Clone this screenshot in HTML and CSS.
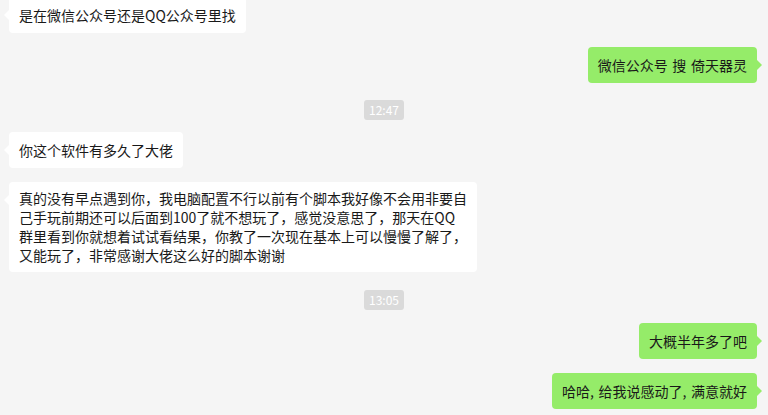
FILE: index.html
```html
<!DOCTYPE html>
<html lang="zh-CN">
<head>
<meta charset="utf-8">
<title>聊天</title>
<link rel="stylesheet" href="styles.css">
</head>
<body>
<div class="chat">
  <div class="row left first"><div class="bubble">是在微信公众号还是QQ公众号里找</div></div>
  <div class="row right"><div class="bubble green">微信公众号 搜 倚天器灵</div></div>
  <div class="time"><span>12:47</span></div>
  <div class="row left"><div class="bubble">你这个软件有多久了大佬</div></div>
  <div class="row left"><div class="bubble multi">真的没有早点遇到你，我电脑配置不行以前有个脚本我好像不会用非要自<br>己手玩前期还可以后面到100了就不想玩了，感觉没意思了，那天在QQ<br>群里看到你就想着试试看结果，你教了一次现在基本上可以慢慢了解了，<br>又能玩了，非常感谢大佬这么好的脚本谢谢</div></div>
  <div class="time second"><span>13:05</span></div>
  <div class="row right"><div class="bubble green">大概半年多了吧</div></div>
  <div class="row right"><div class="bubble green">哈哈, 给我说感动了, 满意就好</div></div>
</div>
</body>
</html>
```
FILE: styles.css
```css
html, body {
  margin: 0;
  padding: 0;
  background: #f5f5f5;
  width: 768px;
  height: 415px;
  overflow: hidden;
}
body {
  font-family: "Noto Sans CJK SC", "Microsoft YaHei", sans-serif;
  font-size: 14px;
  color: #191919;
}
.chat {
  display: flex;
  flex-direction: column;
  gap: 14px;
  padding: 0 11px 0 9px;
}
.row {
  display: flex;
}
.row.first {
  margin-top: -3px;
}
.row.left { justify-content: flex-start; }
.row.right { justify-content: flex-end; }
.bubble {
  position: relative;
  background: #ffffff;
  border-radius: 4px;
  padding: 8px 10px;
  line-height: 20px;
  white-space: nowrap;
  word-spacing: 1.5px;
}
.bubble.multi {
  padding: 7px 10px;
  line-height: 19px;
}
.bubble::before {
  content: "";
  position: absolute;
  top: 13px;
  width: 0;
  height: 0;
  border-top: 5px solid transparent;
  border-bottom: 5px solid transparent;
}
.left .bubble::before {
  left: -5px;
  border-right: 5px solid #ffffff;
}
.right .bubble::before {
  right: -5px;
  border-left: 5px solid #95ec69;
}
.bubble.green {
  background: #95ec69;
}
.time {
  display: flex;
  justify-content: center;
  margin: 3px 0 -2px;
  padding-left: 2px;
}
.time.second {
  margin: 4px 0 -1px;
}
.time span {
  background: #dadada;
  color: #ffffff;
  font-size: 12px;
  line-height: 20px;
  height: 20px;
  padding: 0 5px;
  border-radius: 3px;
  font-family: "Noto Sans CJK SC", "Microsoft YaHei", sans-serif;
}
```
